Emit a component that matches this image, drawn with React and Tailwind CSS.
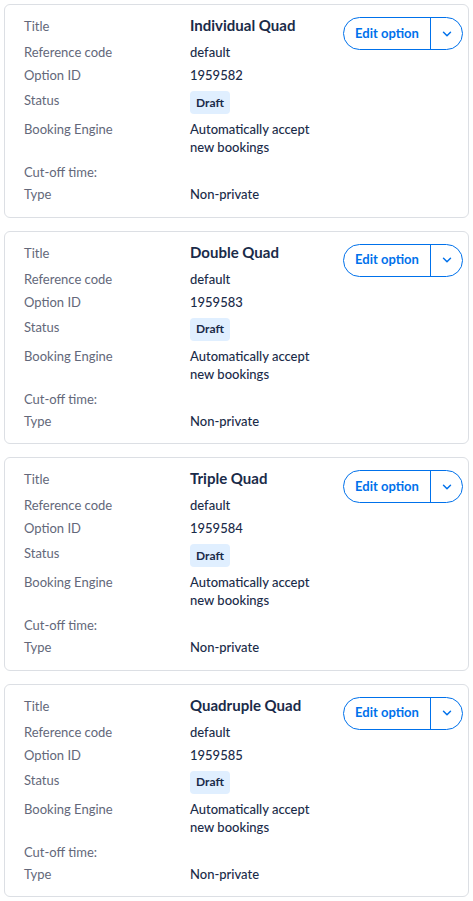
import React from 'react';

const options = [
  { title: 'Individual Quad', id: '1959582' },
  { title: 'Double Quad', id: '1959583' },
  { title: 'Triple Quad', id: '1959584' },
  { title: 'Quadruple Quad', id: '1959585' },
];

const Row = ({ label, className = '', children }) => (
  <div className={`flex ${className}`}>
    <div className="w-[166px] shrink-0 text-[13px] leading-[18px] text-[#63687a]">{label}</div>
    <div className="text-[13px] leading-[18px] font-medium text-[#1a2b49]">{children}</div>
  </div>
);

const OptionCard = ({ option }) => (
  <div className="flex rounded-md border border-[#dcdfe4] bg-white pt-[12px] pb-[13.5px] pl-[19px] pr-[5px]">
    <div className="flex-1">
      <div className="flex">
        <div className="w-[166px] shrink-0 text-[13px] leading-[18px] text-[#63687a]">Title</div>
        <div className="-mt-[2px] text-[15px] leading-[21px] font-bold text-[#1a2b49]">{option.title}</div>
      </div>
      <Row label="Reference code" className="mt-[7px]">default</Row>
      <Row label="Option ID" className="mt-[5px]">{option.id}</Row>
      <Row label="Status" className="mt-[7px]">
        <span className="inline-flex h-[23px] items-center rounded-[4px] bg-[#e0efff] px-[6px] text-[12px] font-bold text-[#1a2b49]">
          Draft
        </span>
      </Row>
      <Row label="Booking Engine" className="mt-[6px]">
        <div className="w-[125px]">Automatically accept new bookings</div>
      </Row>
      <Row label="Cut-off time:" className="mt-[7px]"></Row>
      <Row label="Type" className="mt-[4px]">Non-private</Row>
    </div>
    <div className="flex h-[33px] w-[120px] shrink-0 rounded-full border border-[#0071eb] text-[#0071eb]">
      <button className="flex flex-1 items-center justify-center border-r border-[#0071eb] text-[13px] font-bold">
        Edit option
      </button>
      <button className="flex w-[31px] items-center justify-center">
        <svg width="14" height="14" viewBox="0 0 24 24" fill="none" stroke="currentColor" strokeWidth="2.5" strokeLinecap="round" strokeLinejoin="round">
          <path d="M6 9l6 6 6-6" />
        </svg>
      </button>
    </div>
  </div>
);

export default function App() {
  return (
    <div className="flex flex-col gap-[13px] bg-white p-[4px]" style={{ fontFamily: 'Lato, "Noto Sans", sans-serif' }}>
      {options.map((o) => (
        <OptionCard key={o.id} option={o} />
      ))}
    </div>
  );
}
